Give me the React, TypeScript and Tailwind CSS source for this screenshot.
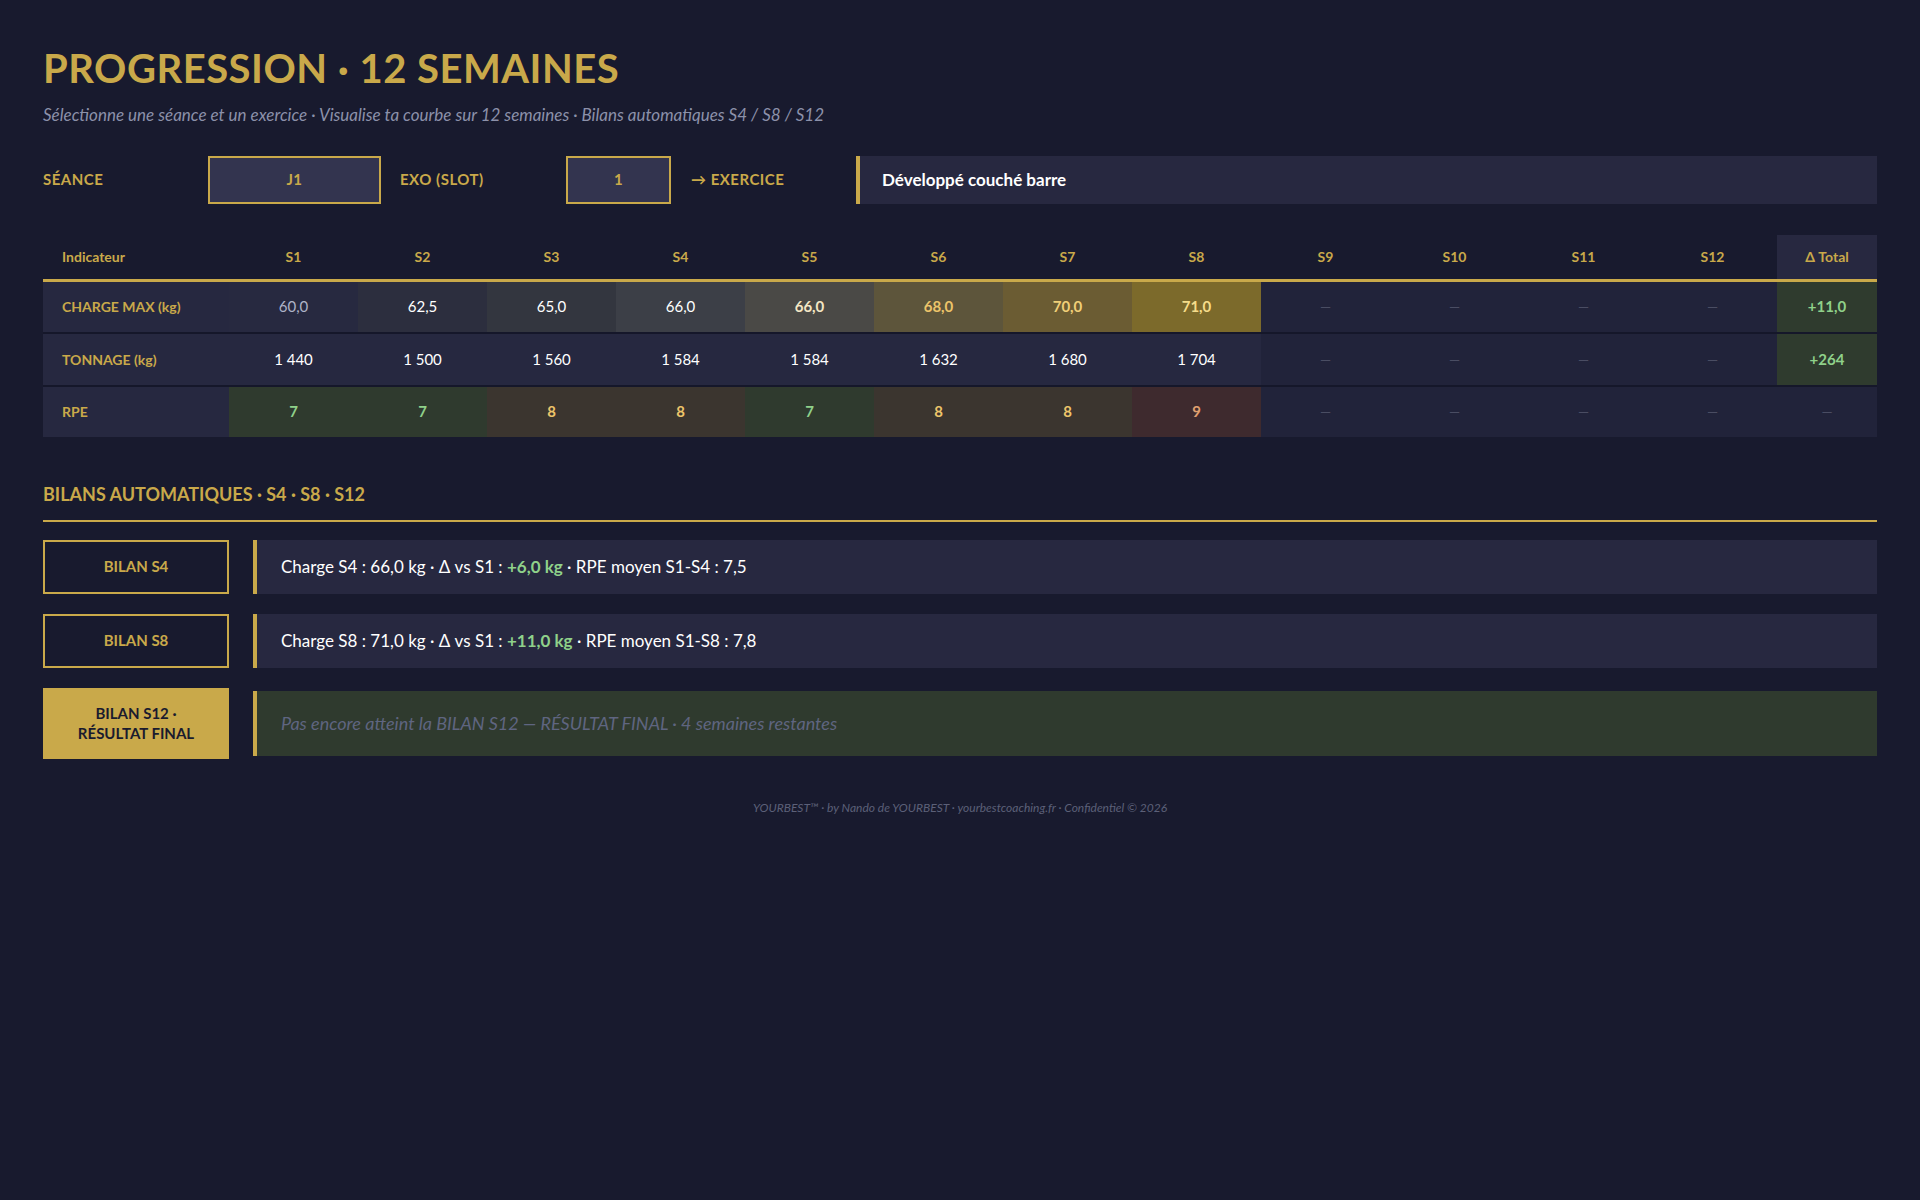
const weeks = ['S1', 'S2', 'S3', 'S4', 'S5', 'S6', 'S7', 'S8', 'S9', 'S10', 'S11', 'S12']

const charge = [
	{ v: '60,0', bg: 'bg-[#272940]', tx: 'text-[#aeb3c8]' },
	{ v: '62,5', bg: 'bg-[#2c2e3e]', tx: 'text-white' },
	{ v: '65,0', bg: 'bg-[#33363f]', tx: 'text-white' },
	{ v: '66,0', bg: 'bg-[#3c3f47]', tx: 'text-white' },
	{ v: '66,0', bg: 'bg-[#4a4946]', tx: 'text-[#f3e6c4] font-bold' },
	{ v: '68,0', bg: 'bg-[#5d553b]', tx: 'text-[#ecc46a] font-bold' },
	{ v: '70,0', bg: 'bg-[#6b5c33]', tx: 'text-[#f0cf78] font-bold' },
	{ v: '71,0', bg: 'bg-[#7c6a2b]', tx: 'text-[#f5dc8a] font-bold' },
]
const tonnage = ['1 440', '1 500', '1 560', '1 584', '1 584', '1 632', '1 680', '1 704']
const rpe = [7, 7, 8, 8, 7, 8, 8, 9]
const rpeStyle = (r: number) =>
	r === 7
		? 'bg-[#2f3a2e] text-[#8fd18a]'
		: r === 8
			? 'bg-[#3b352f] text-[#ecc46a]'
			: 'bg-[#3e2a2e] text-[#e0a070]'

const Dash = () => <span className="text-[#4a4d63]">—</span>

export default function App() {
	return (
		<div className="min-h-[1200px] bg-[#181a2e] px-[43px] pt-[42px] font-[Lato,sans-serif] text-white">
			<h1 className="text-[40px] leading-[52px] font-bold tracking-[0.5px] text-[#c9a94a]">
				PROGRESSION · 12 SEMAINES
			</h1>
			<p className="mt-[8px] text-[17px] text-[#8c91aa] italic">
				Sélectionne une séance et un exercice · Visualise ta courbe sur 12 semaines · Bilans automatiques S4 / S8 / S12
			</p>

			<div className="mt-[28px] flex h-[48px] items-center text-[15px] font-bold tracking-[0.5px] text-[#c9a94a]">
				<div className="w-[165px]">SÉANCE</div>
				<div className="flex h-full w-[173px] items-center justify-center border-2 border-[#c9a94a] bg-[#33344f]">J1</div>
				<div className="w-[185px] pl-[19px]">EXO (SLOT)</div>
				<div className="flex h-full w-[105px] items-center justify-center border-2 border-[#c9a94a] bg-[#33344f]">1</div>
				<div className="w-[185px] pl-[20px]">→ EXERCICE</div>
				<div className="flex h-full flex-1 items-center border-l-4 border-[#c9a94a] bg-[#272840] pl-[22px] text-[17px] tracking-normal text-white">
					Développé couché barre
				</div>
			</div>

			<div className="mt-[31px] text-[14px]">
				<div className="flex h-[47px] items-center border-b-[3px] border-[#c9a94a] font-bold text-[#c9a94a]">
					<div className="w-[186px] pl-[19px]">Indicateur</div>
					{weeks.map((w) => (
						<div key={w} className="w-[129px] text-center">{w}</div>
					))}
					<div className="flex h-full w-[100px] items-center justify-center bg-[#272840]">Δ Total</div>
				</div>

				<div className="flex h-[52px] items-center border-b-2 border-[#15172a]">
					<div className="flex h-full w-[186px] items-center bg-[#262840] pl-[19px] font-bold text-[#c9a94a]">CHARGE MAX (kg)</div>
					{charge.map((c, i) => (
						<div key={i} className={`flex h-full w-[129px] items-center justify-center text-[15px] ${c.bg} ${c.tx}`}>{c.v}</div>
					))}
					{[0, 1, 2, 3].map((i) => (
						<div key={i} className="flex h-full w-[129px] items-center justify-center bg-[#21233a]"><Dash /></div>
					))}
					<div className="flex h-full w-[100px] items-center justify-center bg-[#2f3b2e] text-[15px] font-bold text-[#8fd18a]">+11,0</div>
				</div>

				<div className="flex h-[53px] items-center border-b-2 border-[#15172a]">
					<div className="flex h-full w-[186px] items-center bg-[#262840] pl-[19px] font-bold text-[#c9a94a]">TONNAGE (kg)</div>
					{tonnage.map((t, i) => (
						<div key={i} className="flex h-full w-[129px] items-center justify-center bg-[#262840] text-[15px]">{t}</div>
					))}
					{[0, 1, 2, 3].map((i) => (
						<div key={i} className="flex h-full w-[129px] items-center justify-center bg-[#21233a]"><Dash /></div>
					))}
					<div className="flex h-full w-[100px] items-center justify-center bg-[#2f3b2e] text-[15px] font-bold text-[#8fd18a]">+264</div>
				</div>

				<div className="flex h-[50px] items-center">
					<div className="flex h-full w-[186px] items-center bg-[#262840] pl-[19px] font-bold text-[#c9a94a]">RPE</div>
					{rpe.map((r, i) => (
						<div key={i} className={`flex h-full w-[129px] items-center justify-center text-[15px] font-bold ${rpeStyle(r)}`}>{r}</div>
					))}
					{[0, 1, 2, 3].map((i) => (
						<div key={i} className="flex h-full w-[129px] items-center justify-center bg-[#21233a]"><Dash /></div>
					))}
					<div className="flex h-full w-[100px] items-center justify-center bg-[#21233a]"><Dash /></div>
				</div>
			</div>

			<h2 className="mt-[44px] border-b-2 border-[#c9a94a] pb-[12px] text-[18px] font-bold text-[#c9a94a]">
				BILANS AUTOMATIQUES · S4 · S8 · S12
			</h2>

			<div className="mt-[18px] flex flex-col gap-[20px]">
				<div className="flex h-[54px] gap-[24px]">
					<div className="flex w-[186px] items-center justify-center border-2 border-[#c9a94a] text-[15px] font-bold text-[#c9a94a]">BILAN S4</div>
					<div className="flex flex-1 items-center border-l-4 border-[#c9a94a] bg-[#272840] pl-[24px] text-[17px]">
						Charge S4 : 66,0 kg · Δ vs S1 :&nbsp;<span className="font-bold text-[#8fd18a]">+6,0 kg</span>&nbsp;· RPE moyen S1-S4 : 7,5
					</div>
				</div>
				<div className="flex h-[54px] gap-[24px]">
					<div className="flex w-[186px] items-center justify-center border-2 border-[#c9a94a] text-[15px] font-bold text-[#c9a94a]">BILAN S8</div>
					<div className="flex flex-1 items-center border-l-4 border-[#c9a94a] bg-[#272840] pl-[24px] text-[17px]">
						Charge S8 : 71,0 kg · Δ vs S1 :&nbsp;<span className="font-bold text-[#8fd18a]">+11,0 kg</span>&nbsp;· RPE moyen S1-S8 : 7,8
					</div>
				</div>
				<div className="flex h-[71px] gap-[24px]">
					<div className="flex w-[186px] items-center justify-center bg-[#c9a94a] text-center text-[15px] leading-[20px] font-bold text-[#1a1b2e]">
						BILAN S12 ·<br />RÉSULTAT FINAL
					</div>
					<div className="my-[3px] flex flex-1 items-center border-l-4 border-[#c9a94a] bg-[#2f3a2e] pl-[24px] text-[18px] text-[#5f6580] italic">
						Pas encore atteint la BILAN S12 — RÉSULTAT FINAL · 4 semaines restantes
					</div>
				</div>
			</div>

			<p className="mt-[40px] text-center text-[12px] text-[#5c6078] italic">
				YOURBEST™ · by Nando de YOURBEST · yourbestcoaching.fr · Confidentiel © 2026
			</p>
		</div>
	)
}
